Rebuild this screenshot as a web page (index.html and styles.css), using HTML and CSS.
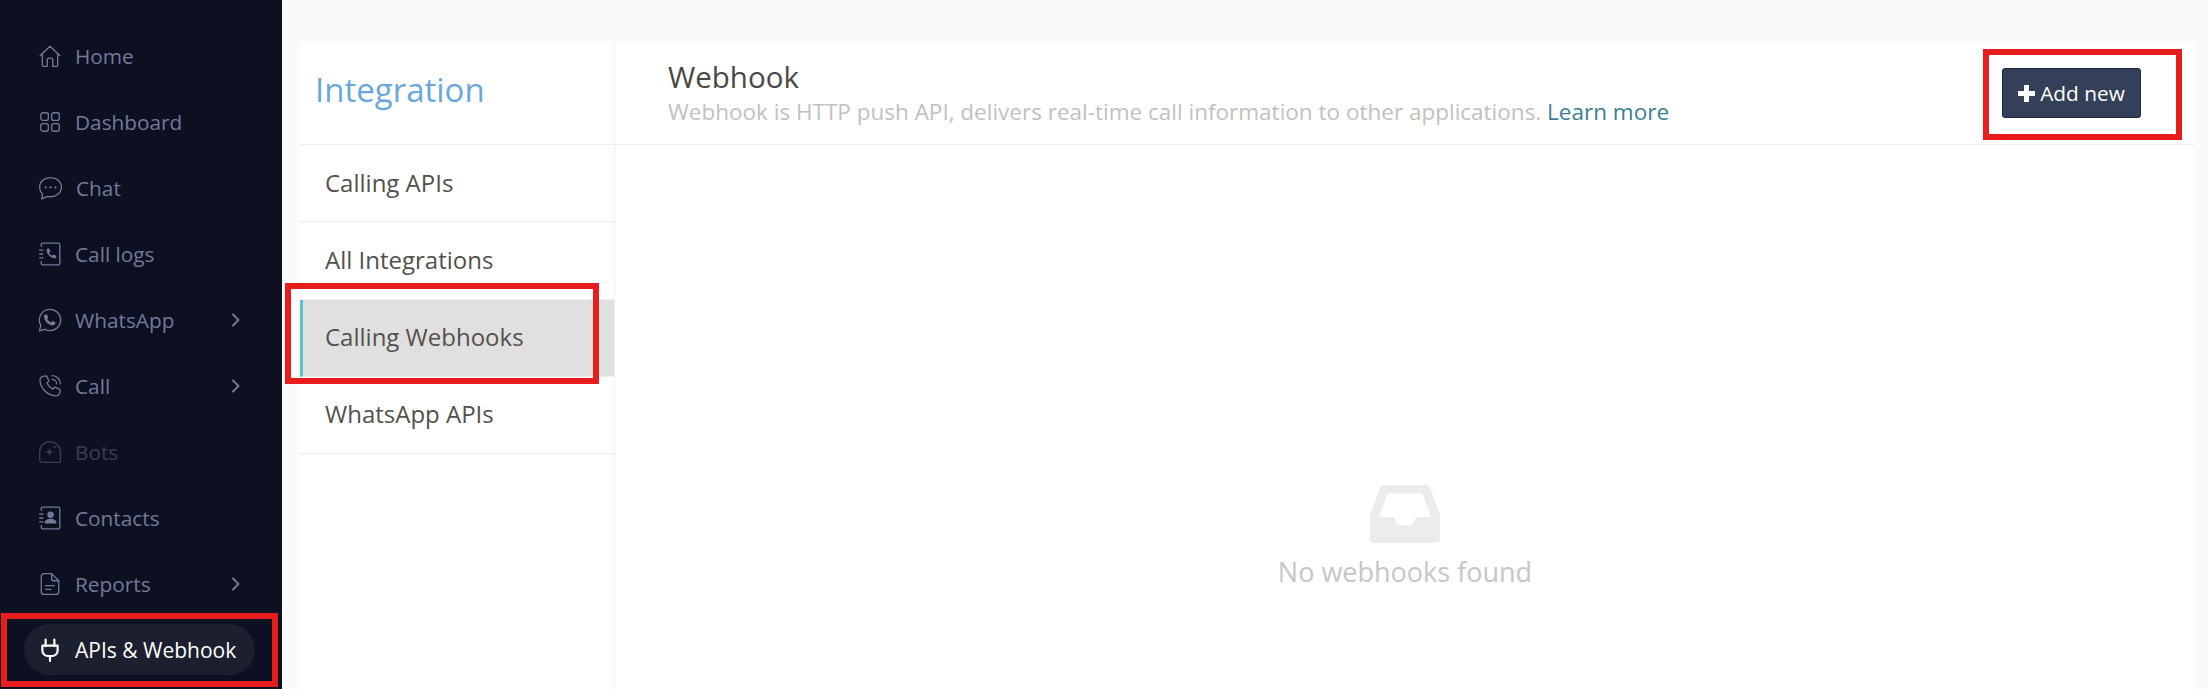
FILE: index.html
```html
<!DOCTYPE html>
<html lang="en">
<head>
  <meta charset="UTF-8">
  <title>APIs &amp; Webhook</title>
  <link rel="stylesheet" href="styles.css">
</head>
<body>
  <!-- Left navigation -->
  <aside class="sidebar">
    <a class="nav-item">
      <svg class="nav-icon" viewBox="0 0 22 22"><path d="M2 10.500 11 2l9 8.500M4 9v10.500a1 1 0 0 0 1 1h3.500v-6a1.500 1.500 0 0 1 1.500-1.500h2a1.500 1.500 0 0 1 1.500 1.500v6H17a1 1 0 0 0 1-1V9"/></svg>
      <span>Home</span>
    </a>
    <a class="nav-item">
      <svg class="nav-icon" viewBox="0 0 22 22"><rect x="2.500" y="2.500" width="7" height="7" rx="2"/><rect x="12.500" y="2.500" width="7" height="7" rx="2"/><rect x="2.500" y="12.500" width="7" height="7" rx="2"/><rect x="12.500" y="12.500" width="7" height="7" rx="2"/></svg>
      <span>Dashboard</span>
    </a>
    <a class="nav-item">
      <svg class="nav-icon" viewBox="0 0 22 22"><path d="M11.500 1.500c5.500 0 10 3.600 10 8.700S17 19 11.500 19c-1 0-2-.1-3-.4L3.500 21l.7-4C2.700 15.400 1.500 13 1.500 10.200c0-5.100 4.500-8.700 10-8.700z"/><circle class="dot" cx="7" cy="10.500" r="1"/><circle class="dot" cx="11.500" cy="10.500" r="1"/><circle class="dot" cx="16" cy="10.500" r="1"/></svg>
      <span class="nudge">Chat</span>
    </a>
    <a class="nav-item">
      <svg class="nav-icon" viewBox="0 0 22 22"><path d="M3 4V2.500A1.500 1.500 0 0 1 4.500 1h14A1.500 1.500 0 0 1 20 2.500v17a1.500 1.500 0 0 1-1.500 1.500h-14A1.500 1.500 0 0 1 3 19.500V18M1.500 7.500h3M1.500 11h3M1.500 14.500h3"/><path class="solid" d="M8 6.500l2-.7 1.500 3-1.200 1.200c.5 1.200 1.400 2.100 2.600 2.600l1.200-1.200 2.900 1.500-.7 2c-4.500.5-8.800-3.800-8.300-8.400z"/></svg>
      <span>Call logs</span>
    </a>
    <a class="nav-item">
      <svg class="nav-icon" viewBox="0 0 22 22"><path d="M11 1.200a9.800 9.800 0 0 1 0 19.600c-1.700 0-3.300-.4-4.700-1.200l-5 1.300 1.300-4.900A9.800 9.800 0 0 1 11 1.200z"/><path class="solid" d="M7.700 6c.4 0 .6 0 .8.500l.8 1.900c.1.300 0 .5-.1.700l-.7.900c.8 1.500 1.900 2.500 3.500 3.200l.9-1c.2-.3.400-.3.700-.2l1.900.9c.4.200.5.300.5.600 0 1.500-1.300 2.500-2.700 2.400-3.700-.4-7.400-4-7.600-7.300C4.400 7.100 6.200 6 7.700 6z"/></svg>
      <span>WhatsApp</span>
      <svg class="chevron" viewBox="0 0 10 14"><path d="M2 1.500 7.500 7 2 12.500"/></svg>
    </a>
    <a class="nav-item">
      <svg class="nav-icon" viewBox="0 0 22 22"><path d="M5.500 2 8 1.800l2 4.700-1.800 1.800c1 2.300 2.900 4.300 5.400 5.500l1.800-1.800 4.700 2v2.500c0 2-1.800 3.800-4 3.500C8.500 19.500 2.400 13.500 1.800 6c-.2-2 1.600-4 3.700-4zM13 1.500a7.500 7.500 0 0 1 7.500 7.500M13 5a4 4 0 0 1 4 4"/></svg>
      <span>Call</span>
      <svg class="chevron" viewBox="0 0 10 14"><path d="M2 1.500 7.500 7 2 12.500"/></svg>
    </a>
    <a class="nav-item disabled">
      <svg class="nav-icon" viewBox="0 0 22 22"><path d="M11 1.500a9.500 9.500 0 0 1 9.500 9.500v9.500H4a2.500 2.500 0 0 1-2.500-2.500v-7A9.500 9.500 0 0 1 11 1.500z"/><path class="solid" d="M10.500 7l1 3 3 1-3 1-1 3-1-3-3-1 3-1zM15 4.500l.5 1.500 1.500.5-1.500.5-.5 1.500-.5-1.500L13 6.500l1.500-.5z"/></svg>
      <span>Bots</span>
    </a>
    <a class="nav-item">
      <svg class="nav-icon" viewBox="0 0 22 22"><path d="M3 4V2.500A1.500 1.500 0 0 1 4.500 1h14A1.500 1.500 0 0 1 20 2.500v17a1.500 1.500 0 0 1-1.500 1.500h-14A1.500 1.500 0 0 1 3 19.500V18M1.500 7.500h3M1.500 11h3M1.500 14.500h3"/><circle class="solid" cx="11.500" cy="8" r="3"/><path class="solid" d="M6 16c0-2.800 2.500-4.200 5.500-4.200S17 13.200 17 16z"/></svg>
      <span>Contacts</span>
    </a>
    <a class="nav-item">
      <svg class="nav-icon" viewBox="0 0 22 22"><path d="M12.500 1.500H5.500a2.500 2.500 0 0 0-2.500 2.500v14a2.500 2.500 0 0 0 2.500 2.500h11a2.500 2.500 0 0 0 2.500-2.500V8zM12.500 1.500V6a2 2 0 0 0 2 2H19M7 12.500h8M7 16h5"/></svg>
      <span>Reports</span>
      <svg class="chevron" viewBox="0 0 10 14"><path d="M2 1.500 7.500 7 2 12.500"/></svg>
    </a>
    <a class="nav-item active">
      <svg class="nav-icon" viewBox="0 0 22 22"><path d="M7 1.500v6M15 1.500v6M4 7h14v4.500c0 3-2.500 5-5 5H9c-2.500 0-5-2-5-5zM11 16.500v4.500"/></svg>
      <span>APIs &amp; Webhook</span>
    </a>
  </aside>

  <main class="content">
    <div class="card">
      <!-- Integration menu -->
      <section class="side-menu">
        <h1 class="menu-title">Integration</h1>
        <a class="menu-item">Calling APIs</a>
        <a class="menu-item">All Integrations</a>
        <a class="menu-item selected">Calling Webhooks</a>
        <a class="menu-item">WhatsApp APIs</a>
      </section>

      <section class="panel">
        <header class="panel-head">
          <div>
            <h2 class="panel-title">Webhook</h2>
            <p class="panel-desc">Webhook is HTTP push API, delivers real-time call information to other applications. <a class="learn">Learn more</a></p>
          </div>
          <button class="add-btn"><span class="plus"></span>Add new</button>
        </header>
        <div class="empty">
          <svg class="empty-icon" viewBox="0 0 70 58"><path fill-rule="evenodd" d="M14 0h42c2 0 3.500 1 4.300 3L69 27c.6 1 1 2.500 1 4v23c0 2.500-1.500 4-4 4H4c-2.500 0-4-1.500-4-4V31c0-1.500.4-3 1-4L9.700 3C10.500 1 12 0 14 0zM17.500 8.500 9 32h15l3.500 8h15l3.500-8h15L52.500 8.500z"/></svg>
          <p class="empty-text">No webhooks found</p>
        </div>
      </section>
    </div>
  </main>

  <!-- Red annotation frames drawn over the screenshot -->
  <div class="mark mark-nav"></div>
  <div class="mark mark-menu"></div>
  <div class="mark mark-btn"></div>
</body>
</html>
```

FILE: styles.css
```css
* {
  box-sizing: border-box;
}
html, body {
  height: 689px;
}
body {
  margin: 0;
  display: flex;
  overflow: hidden;
  position: relative;
  background-color: #fafafa;
  font-family: "Open Sans", sans-serif;
}
a {
  text-decoration: none;
}

/* Sidebar */
.sidebar {
  width: 282px;
  flex-shrink: 0;
  padding: 30px 27px 0 24px;
  display: flex;
  flex-direction: column;
  gap: 15px;
  background-color: #0d1020;
}
.nav-item {
  height: 51px;
  padding: 0 15px;
  display: flex;
  align-items: center;
  gap: 14px;
  border-radius: 26px;
  color: #727a99;
  font-size: 20.800px;
}
.nav-icon {
  width: 24px;
  height: 24px;
  margin: 0 -1px;
  flex-shrink: 0;
  fill: none;
  stroke: currentColor;
  stroke-width: 1.200;
  stroke-linecap: round;
  stroke-linejoin: round;
}
.nav-icon .solid, .nav-icon .dot {
  fill: currentColor;
  stroke: none;
}
.nudge {
  margin-left: 1px;
}
.chevron {
  width: 10px;
  height: 14px;
  margin-left: auto;
  margin-right: -1px;
  fill: none;
  stroke: currentColor;
  stroke-width: 2;
  stroke-linecap: round;
  stroke-linejoin: round;
}
.disabled {
  color: #3a3e52;
}
.active {
  background-color: #1c1f2e;
  color: #fff;
  font-size: 21px;
}
.active .nav-icon {
  stroke-width: 2;
}

/* Main card */
.content {
  flex: 1;
  padding: 42px 13px 0 18px;
}
.card {
  height: 100%;
  display: flex;
  background-color: #fff;
  border-radius: 6px 6px 0 0;
}
.side-menu {
  width: 315px;
  flex-shrink: 0;
  border-right: 1px solid #eee;
}
.menu-title {
  height: 103px;
  margin: 0;
  padding: 0 0 8px 15px;
  display: flex;
  align-items: center;
  border-bottom: 1px solid #eee;
  color: #68a8dc;
  font-size: 33px;
  font-weight: 400;
}
.menu-item {
  height: 77.250px;
  padding: 0 0 2px 25px;
  display: flex;
  align-items: center;
  border-bottom: 1px solid #eee;
  color: #54504c;
  font-size: 24px;
}
.selected {
  padding-left: 22px;
  border-left: 3px solid #5bc0cf;
  background-color: #e0e0e0;
}

/* Webhook panel */
.panel {
  flex: 1;
  display: flex;
  flex-direction: column;
}
.panel-head {
  height: 103px;
  padding: 0 54px 0 53px;
  display: flex;
  align-items: center;
  justify-content: space-between;
  border-bottom: 1px solid #eee;
}
.panel-title {
  margin: 0;
  color: #4a4846;
  font-size: 29.500px;
  font-weight: 400;
  line-height: 36px;
}
.panel-desc {
  margin: 2px 0 0;
  color: #c4c0bc;
  font-size: 22.500px;
  line-height: 30px;
}
.learn {
  color: #3a7f93;
}
.add-btn {
  width: 139px;
  height: 50px;
  padding: 0;
  display: flex;
  align-items: center;
  justify-content: center;
  gap: 5px;
  border: 1px solid #1f2a3f;
  border-radius: 3px;
  background-color: #344059;
  color: #fff;
  font-family: inherit;
  font-size: 20.800px;
}
.plus {
  width: 17px;
  height: 17px;
  background:
    linear-gradient(#fff, #fff) center / 100% 5px no-repeat,
    linear-gradient(#fff, #fff) center / 5px 100% no-repeat;
  border-radius: 1px;
}
.empty {
  flex: 1;
  padding-top: 340px;
  display: flex;
  flex-direction: column;
  align-items: center;
}
.empty-icon {
  width: 70px;
  height: 58px;
  fill: #ececec;
}
.empty-text {
  margin: 11px 0 0;
  color: #c8c6c4;
  font-size: 27px;
  line-height: 36px;
}

/* Annotation frames */
.mark {
  position: absolute;
  border: 6px solid #e71d1d;
}
.mark-nav {
  left: 1px;
  top: 613px;
  width: 277px;
  height: 74px;
}
.mark-menu {
  left: 285px;
  top: 283px;
  width: 314px;
  height: 101px;
}
.mark-btn {
  left: 1983px;
  top: 49px;
  width: 199px;
  height: 91px;
}
```
